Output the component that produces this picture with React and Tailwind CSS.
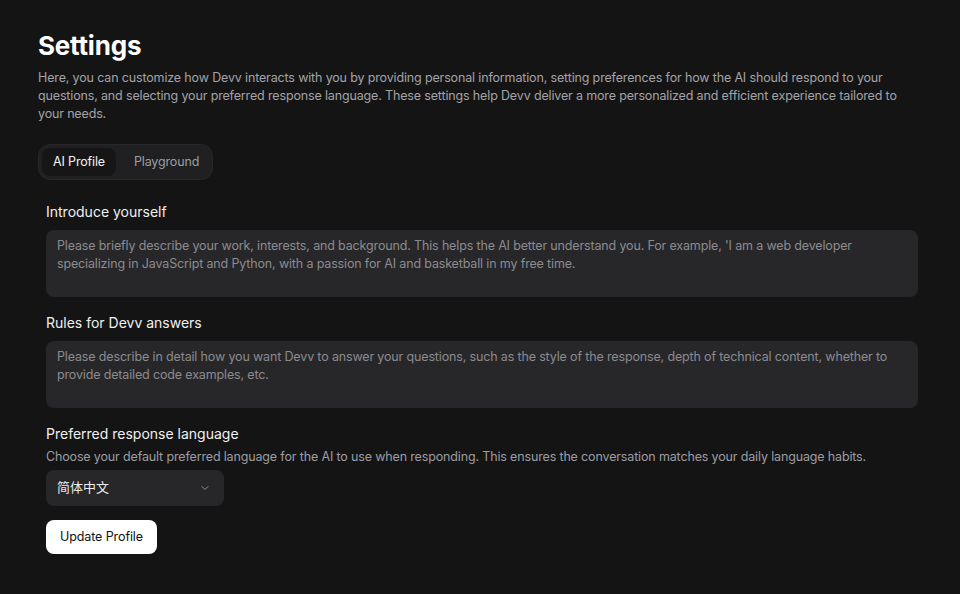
import React from "react";
import { ChevronDown } from "lucide-react";

const Field = ({ label, placeholder }) => (
  <div className="flex flex-col gap-2">
    <label className="text-[14px] leading-[20px] font-normal text-[#f0f0f0]">{label}</label>
    <textarea
      placeholder={placeholder}
      className="h-[67px] w-full resize-none rounded-lg bg-[#27272a] px-[11px] py-[7px] text-[12.5px] leading-[18px] tracking-[-0.15px] text-[#e5e5e5] placeholder:text-[#8b8b8f] outline-none"
    />
  </div>
);

export default function App() {
  return (
    <div
      className="min-h-screen w-full bg-[#141415] text-white"
      style={{ fontFamily: "Inter, 'Noto Sans CJK SC', sans-serif" }}
    >
      <div className="pl-[38px] pr-[34px] pt-[30px]">
        {/* Header */}
        <h1 className="text-[26px] leading-[32px] font-bold tracking-[-0.2px] text-white">Settings</h1>
        <p className="mt-[7px] pr-[20px] text-[12.5px] leading-[18px] tracking-[-0.15px] text-[#a3a3a6]">
          Here, you can customize how Devv interacts with you by providing personal information, setting preferences
          for how the AI should respond to your questions, and selecting your preferred response language. These
          settings help Devv deliver a more personalized and efficient experience tailored to your needs.
        </p>

        {/* Tabs */}
        <div className="mt-[21px] inline-flex h-[36px] items-center gap-[4px] rounded-xl border border-[#27272a] bg-[#202022] p-[3px]">
          <button className="h-[28px] rounded-lg bg-[#161617] px-[11px] text-[12.5px] tracking-[-0.15px] text-[#f2f2f2]">
            AI Profile
          </button>
          <button className="h-[28px] rounded-lg pl-[14px] pr-[10px] text-[12.5px] tracking-[-0.15px] text-[#9d9da1]">
            Playground
          </button>
        </div>

        {/* Form */}
        <div className="mt-[22px] flex flex-col gap-4 px-2">
          <Field
            label="Introduce yourself"
            placeholder="Please briefly describe your work, interests, and background. This helps the AI better understand you. For example, 'I am a web developer specializing in JavaScript and Python, with a passion for AI and basketball in my free time."
          />
          <Field
            label="Rules for Devv answers"
            placeholder="Please describe in detail how you want Devv to answer your questions, such as the style of the response, depth of technical content, whether to provide detailed code examples, etc."
          />

          <div className="flex flex-col">
            <label className="text-[14px] leading-[20px] font-normal text-[#f0f0f0]">Preferred response language</label>
            <p className="mt-[4px] text-[12.5px] leading-[18px] tracking-[-0.15px] text-[#9d9da1]">
              Choose your default preferred language for the AI to use when responding. This ensures the conversation
              matches your daily language habits.
            </p>
            <button className="mt-[4px] flex h-[36px] w-[178px] items-center justify-between rounded-lg bg-[#27272a] pl-[11px] pr-[13px] text-[13px] text-[#ededed]">
              <span>简体中文</span>
              <ChevronDown className="h-[12px] w-[12px] text-[#a3a3a6]" strokeWidth={1.75} />
            </button>
            <div className="mt-[14px]">
              <button className="h-[34px] rounded-lg bg-white px-[14px] text-[12.5px] tracking-[-0.1px] text-[#111]">
                Update Profile
              </button>
            </div>
          </div>
        </div>
      </div>
    </div>
  );
}
